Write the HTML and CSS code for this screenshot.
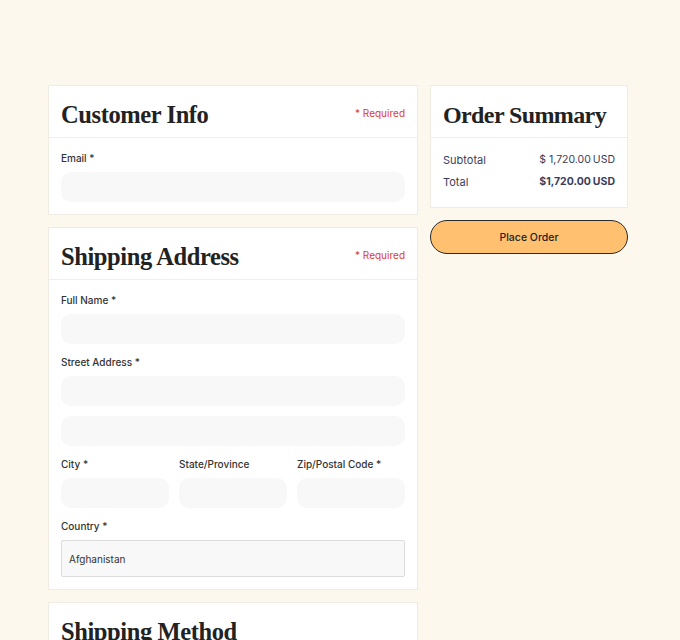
FILE: index.html
```html
<!DOCTYPE html>
<html lang="en">
<head>
<meta charset="utf-8">
<title>Checkout</title>
<link rel="stylesheet" href="styles.css">
</head>
<body>
<div class="checkout">
  <div class="main-col">
    <section class="card">
      <header class="card-head">
        <h2 class="card-title">Customer Info</h2>
        <span class="req">* Required</span>
      </header>
      <div class="card-body">
        <div class="field">
          <label class="label">Email *</label>
          <div class="input"></div>
        </div>
      </div>
    </section>

    <section class="card">
      <header class="card-head">
        <h2 class="card-title">Shipping Address</h2>
        <span class="req">* Required</span>
      </header>
      <div class="card-body">
        <div class="field">
          <label class="label">Full Name *</label>
          <div class="input"></div>
        </div>
        <div class="field">
          <label class="label">Street Address *</label>
          <div class="input"></div>
          <div class="input input-extra"></div>
        </div>
        <div class="field-row">
          <div class="field">
            <label class="label">City *</label>
            <div class="input"></div>
          </div>
          <div class="field">
            <label class="label">State/Province</label>
            <div class="input"></div>
          </div>
          <div class="field">
            <label class="label">Zip/Postal Code *</label>
            <div class="input"></div>
          </div>
        </div>
        <div class="field">
          <label class="label">Country *</label>
          <div class="select">Afghanistan</div>
        </div>
      </div>
    </section>

    <section class="card">
      <header class="card-head">
        <h2 class="card-title">Shipping Method</h2>
      </header>
      <div class="card-body"></div>
    </section>
  </div>

  <aside class="side-col">
    <section class="card">
      <header class="card-head">
        <h2 class="card-title">Order Summary</h2>
      </header>
      <div class="card-body summary">
        <div class="sum-row">
          <span>Subtotal</span>
          <span class="amount">$ 1,720.00<span class="cur">USD</span></span>
        </div>
        <div class="sum-row total">
          <span>Total</span>
          <span class="amount">$1,720.00<span class="cur">USD</span></span>
        </div>
      </div>
    </section>
    <button class="place-btn" type="button">Place Order</button>
  </aside>
</div>
</body>
</html>
```

FILE: styles.css
```css
* { box-sizing: border-box; }

html, body {
  margin: 0;
  padding: 0;
  background: #fcf8ee;
}

body {
  font-family: "Inter", "Noto Sans", sans-serif;
  color: #333;
}

.checkout {
  display: flex;
  align-items: flex-start;
  gap: 12px;
  padding: 85px 0 40px 48px;
}

.main-col {
  width: 370px;
  display: flex;
  flex-direction: column;
  gap: 12px;
}

.side-col {
  width: 198px;
  display: flex;
  flex-direction: column;
  gap: 12px;
}

.card {
  background: #fff;
  border: 1px solid #f1ece1;
}

.card-head {
  height: 52px;
  display: flex;
  justify-content: space-between;
  align-items: flex-start;
  padding: 14px 12px 0 12px;
  border-bottom: 1px solid #efefef;
}

.card-title {
  margin: 0;
  font-family: "Liberation Serif", "Times New Roman", serif;
  font-weight: 700;
  font-size: 24.5px;
  line-height: 30px;
  letter-spacing: -0.4px;
  white-space: nowrap;
  color: #222;
}

.req {
  font-size: 10px;
  line-height: 12px;
  color: #e23a32;
  margin-top: 7px;
}

.card-body {
  padding: 13px 12px 12px 12px;
  display: flex;
  flex-direction: column;
  gap: 11px;
}

.field {
  display: flex;
  flex-direction: column;
}

.label {
  display: block;
  font-size: 10px;
  font-weight: 500;
  line-height: 14px;
  color: #333;
  margin-bottom: 7px;
}

.input {
  height: 30px;
  background: #f8f8f8;
  border-radius: 10px;
}

.input-extra {
  margin-top: 10px;
}

.field-row {
  display: grid;
  grid-template-columns: repeat(3, 1fr);
  gap: 10px;
}

.select {
  height: 37px;
  background: #f8f8f8;
  border: 1px solid #dcdcdc;
  border-radius: 2px;
  padding-left: 7px;
  display: flex;
  align-items: center;
  font-size: 10px;
  color: #333;
}

.side-col .card-title {
  font-size: 24px;
  letter-spacing: -0.6px;
}

.summary {
  padding: 15px 12px 18px 12px;
  gap: 8px;
}

.sum-row {
  display: flex;
  justify-content: space-between;
  align-items: center;
  font-size: 11px;
  line-height: 14px;
  color: #3a3d5a;
}

.sum-row .amount {
  font-size: 10.5px;
}

.sum-row.total .amount {
  font-weight: 700;
}

.cur {
  margin-left: 2px;
}

.place-btn {
  height: 34px;
  width: 100%;
  background: #ffc06f;
  border: 1px solid #2a2a2a;
  border-radius: 17px;
  font-family: "Inter", "Noto Sans", sans-serif;
  font-size: 10.5px;
  font-weight: 500;
  color: #222;
  cursor: pointer;
}
```
